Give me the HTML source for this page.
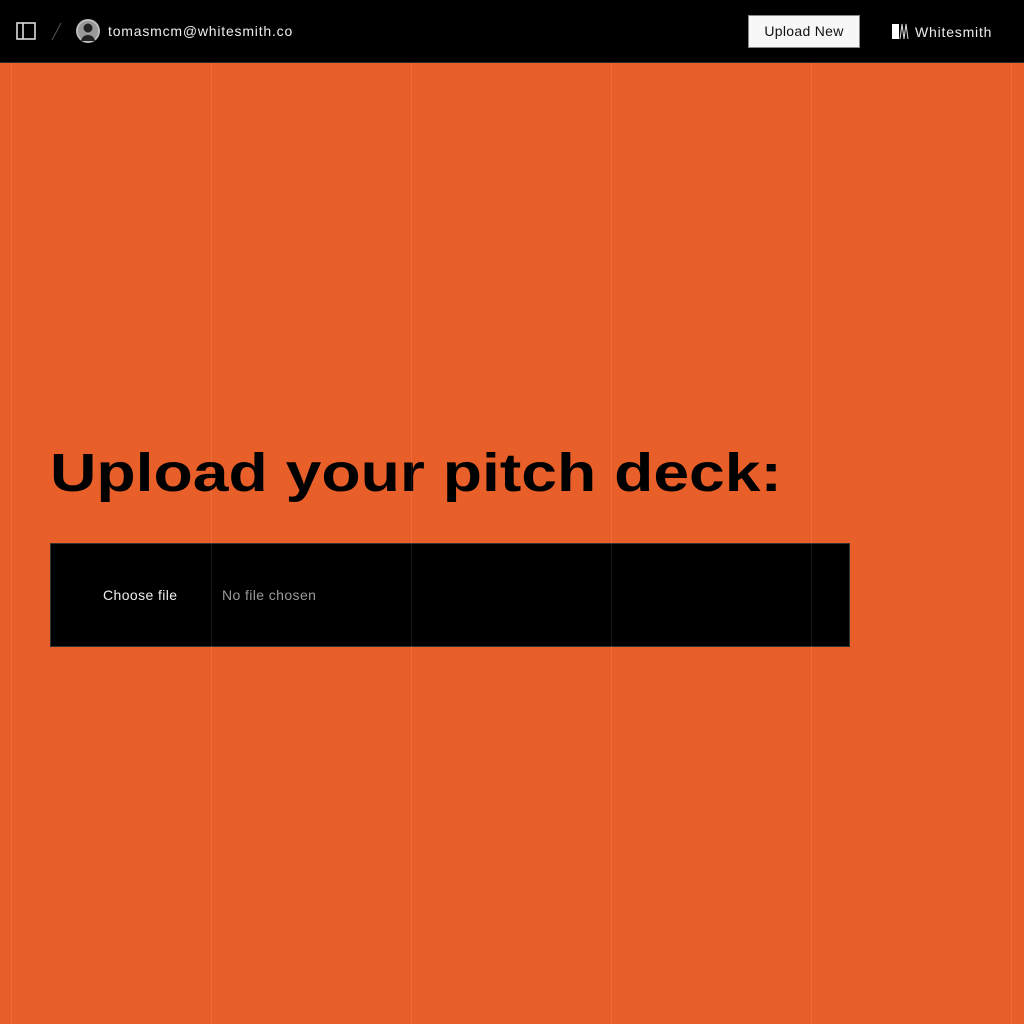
<!DOCTYPE html>
<html><head><meta charset="utf-8"><style>
html,body{margin:0;padding:0}
body{width:1024px;height:1024px;background:#E95F29;position:relative;overflow:hidden;font-family:"Liberation Sans",sans-serif}
.hdr{position:absolute;left:0;top:0;width:1024px;height:62px;background:#000;border-bottom:1px solid #2a2a2a}
.vl{position:absolute;top:63px;bottom:0;width:1px;background:rgba(255,255,255,0.09);z-index:5}
.t{position:absolute;color:#eee;font-size:14px;letter-spacing:0.8px}
h1{position:absolute;left:50px;top:446px;margin:0;font-size:54px;line-height:54px;font-weight:bold;color:#000;transform:scaleX(1.19);transform-origin:left top;white-space:nowrap}
.box{position:absolute;left:50px;top:543px;width:798px;height:102px;background:#000;border:1px solid #333}
.btn{position:absolute;left:748px;top:15px;width:110px;height:31px;background:#f7f7f7;border:1px solid #888;color:#111;font-size:14px;line-height:31px;text-align:center;letter-spacing:0.3px}
</style></head><body>
<div class="hdr">
<svg style="position:absolute;left:16px;top:22px" width="20" height="18" viewBox="0 0 20 18"><rect x="1" y="1" width="18" height="16" fill="none" stroke="#ddd" stroke-width="1.6"/><line x1="7" y1="1" x2="7" y2="17" stroke="#ddd" stroke-width="1.6"/></svg>
<svg style="position:absolute;left:50px;top:22px" width="12" height="20"><line x1="11" y1="1" x2="2" y2="18" stroke="#555" stroke-width="1"/></svg>
<svg style="position:absolute;left:76px;top:19px" width="24" height="24" viewBox="0 0 24 24"><circle cx="12" cy="12" r="12" fill="#bbb"/><circle cx="12" cy="12" r="10" fill="#999"/><circle cx="12" cy="9" r="4.5" fill="#222"/><path d="M5 22 C6 14 18 14 19 22 Z" fill="#222"/></svg>
<div class="t" style="left:108px;top:23px">tomasmcm@whitesmith.co</div>
<div class="btn">Upload New</div>
<svg style="position:absolute;left:891px;top:23px" width="18" height="17" viewBox="0 0 18 17"><rect x="1" y="1" width="7" height="15" fill="#fff"/><path d="M9 16 L11 1 L13 16 L15 1 L17 16" fill="none" stroke="#ddd" stroke-width="1"/></svg>
<div class="t" style="left:915px;top:24px">Whitesmith</div>
</div>
<div class="vl" style="left:11px"></div><div class="vl" style="left:211px"></div><div class="vl" style="left:411px"></div><div class="vl" style="left:611px"></div><div class="vl" style="left:811px"></div><div class="vl" style="left:1011px"></div>
<h1>Upload your pitch deck:</h1>
<div class="box">
<div class="t" style="left:52px;top:43px;color:#f0f0f0;letter-spacing:0.4px">Choose file</div>
<div class="t" style="left:171px;top:43px;color:#999;letter-spacing:0.4px">No file chosen</div>
</div>
</body></html>
